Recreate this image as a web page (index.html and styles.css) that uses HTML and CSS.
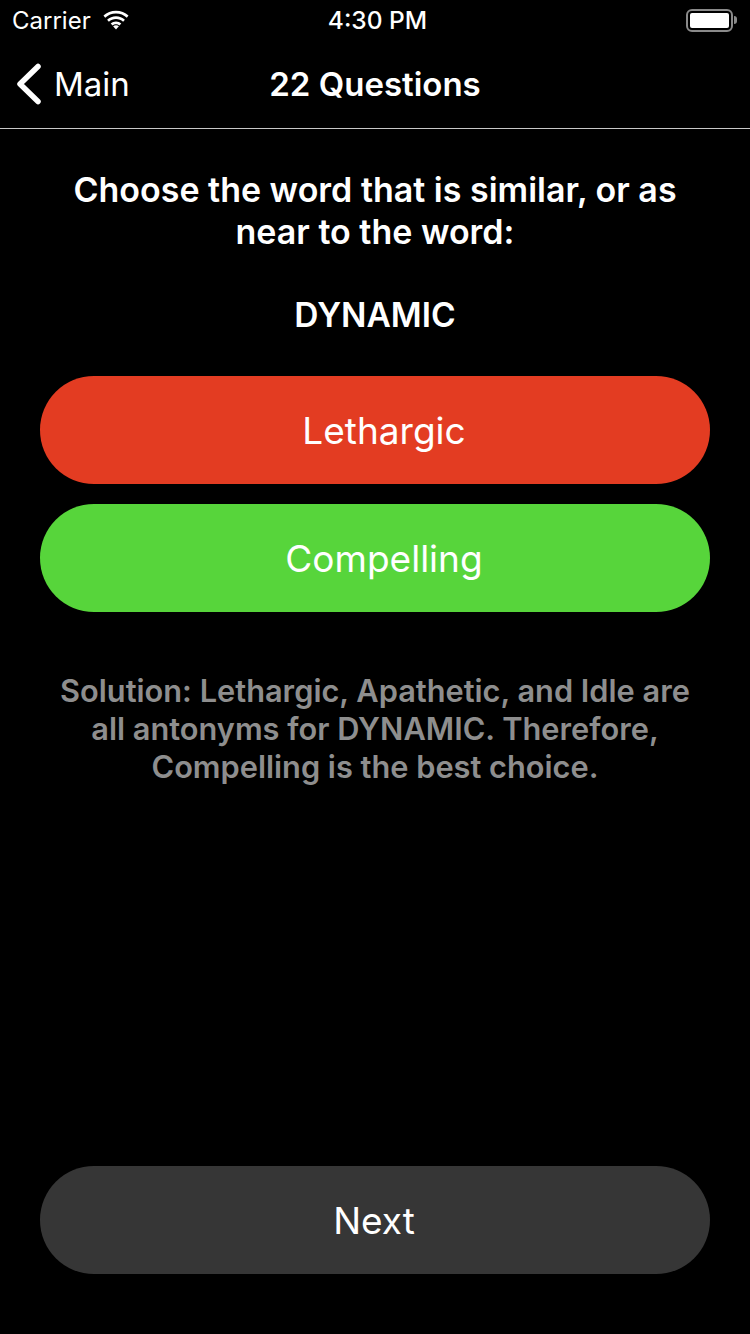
FILE: index.html
```html
<!DOCTYPE html>
<html lang="en">
<head>
  <meta charset="UTF-8">
  <meta name="viewport" content="width=device-width, initial-scale=1.0">
  <title>22 Questions</title>
  <link rel="stylesheet" href="styles.css">
</head>
<body>
  <div class="screen">
    <div class="statusbar">
      <div class="status-left">
        <span>Carrier</span>
        <svg class="wifi" width="30" height="22" viewBox="0 0 30 22">
          <path d="M15 4.5c4.2 0 7.9 1.6 10.8 4.2l1.7-2.1C24.200 3.500 19.800 1.700 15 1.700S5.800 3.500 2.500 6.600l1.700 2.100C7.100 6.100 10.800 4.500 15 4.500z" fill="#fff"/>
          <path d="M15 10c2.700 0 5.200 1 7.100 2.800l1.800-2.100C21.500 8.500 18.400 7.200 15 7.200s-6.500 1.300-8.900 3.500l1.800 2.100C9.800 11 12.300 10 15 10z" fill="#fff"/>
          <path d="M15 15.300c1.300 0 2.500 .5 3.400 1.300l1.900-2.200c-1.400-1.200-3.300-2-5.300-2s-3.900 .8-5.300 2l1.900 2.200c.9-.8 2.100-1.300 3.400-1.300z" fill="#fff"/>
          <path d="M15 20.500l2.900-3.300c-.8-.6-1.800-1-2.900-1s-2.100 .4-2.900 1z" fill="#fff"/>
        </svg>
      </div>
      <div class="status-time">4:30 PM</div>
      <div class="status-right">
        <div class="battery"><div class="battery-fill"></div></div>
        <div class="battery-cap"></div>
      </div>
    </div>

    <div class="navbar">
      <div class="nav-back">
        <svg width="28" height="42" viewBox="0 0 28 42">
          <path d="M24 3.500L6 21l18 17.500" fill="none" stroke="#fff" stroke-width="5.500" stroke-linecap="round" stroke-linejoin="round"/>
        </svg>
        <span>Main</span>
      </div>
      <div class="nav-title">22 Questions</div>
    </div>

    <div class="content">
      <h1 class="question">Choose the word that is similar, or as near to the word:</h1>
      <div class="word">DYNAMIC</div>
      <div class="answers">
        <div class="answer wrong">Lethargic</div>
        <div class="answer right">Compelling</div>
      </div>
      <p class="solution">Solution: Lethargic, Apathetic, and Idle are all antonyms for DYNAMIC. Therefore, Compelling is the best choice.</p>
      <div class="next">Next</div>
    </div>
  </div>
</body>
</html>
```

FILE: styles.css
```css
* { box-sizing: border-box; }
body {
  margin: 0;
  background: #000;
  color: #fff;
  font-family: Inter, 'Noto Sans', sans-serif;
}
.screen {
  width: 750px;
  height: 1334px;
  display: flex;
  flex-direction: column;
  overflow: hidden;
}
.statusbar {
  height: 40px;
  padding: 0 12px;
  display: grid;
  grid-template-columns: 1fr auto 1fr;
  align-items: center;
  font-size: 24px;
}
.status-left {
  display: flex;
  align-items: center;
  gap: 10px;
}
.status-time {
  padding-left: 5px;
  font-size: 24.5px;
  font-weight: 500;
}
.status-right {
  display: flex;
  align-items: center;
  justify-content: flex-end;
  gap: 1px;
  padding-right: 1px;
}
.battery {
  width: 47px;
  height: 23px;
  padding: 2px;
  border: 2px solid #8a8a8a;
  border-radius: 6px;
}
.battery-fill {
  height: 100%;
  background: #fff;
  border-radius: 2px;
}
.battery-cap {
  width: 3px;
  height: 8px;
  background: #8a8a8a;
  border-radius: 0 3px 3px 0;
}
.navbar {
  height: 89px;
  display: grid;
  grid-template-columns: 1fr auto 1fr;
  align-items: center;
  border-bottom: 1px solid #c8c8c8;
}
.nav-back {
  display: flex;
  align-items: center;
  gap: 12px;
  padding-left: 14px;
  font-size: 33px;
}
.nav-title {
  font-size: 33px;
  font-weight: 600;
}
.content {
  flex: 1;
  display: flex;
  flex-direction: column;
  padding: 40px 40px 60px;
}
.question {
  margin: 0;
  padding: 0 20px;
  font-size: 34px;
  line-height: 42px;
  font-weight: 560;
  text-align: center;
}
.word {
  margin-top: 41px;
  font-size: 33.500px;
  line-height: 42px;
  font-weight: 560;
  text-align: center;
}
.answers {
  margin-top: 40px;
  display: flex;
  flex-direction: column;
  gap: 20px;
}
.answer {
  height: 108px;
  border-radius: 54px;
  padding: 1px 0 0 18px;
  display: flex;
  align-items: center;
  justify-content: center;
  font-size: 37px;
}
.wrong { background: #e33c22; }
.right { background: #57d53b; }
.solution {
  margin: 60px 0 0;
  padding: 0 15px;
  font-size: 30.750px;
  line-height: 38px;
  font-weight: 560;
  text-align: center;
  color: #8e8e8e;
}
.next {
  margin-top: auto;
  height: 108px;
  border-radius: 54px;
  padding: 1px 2px 0 0;
  background: #363636;
  display: flex;
  align-items: center;
  justify-content: center;
  font-size: 37px;
}
```
